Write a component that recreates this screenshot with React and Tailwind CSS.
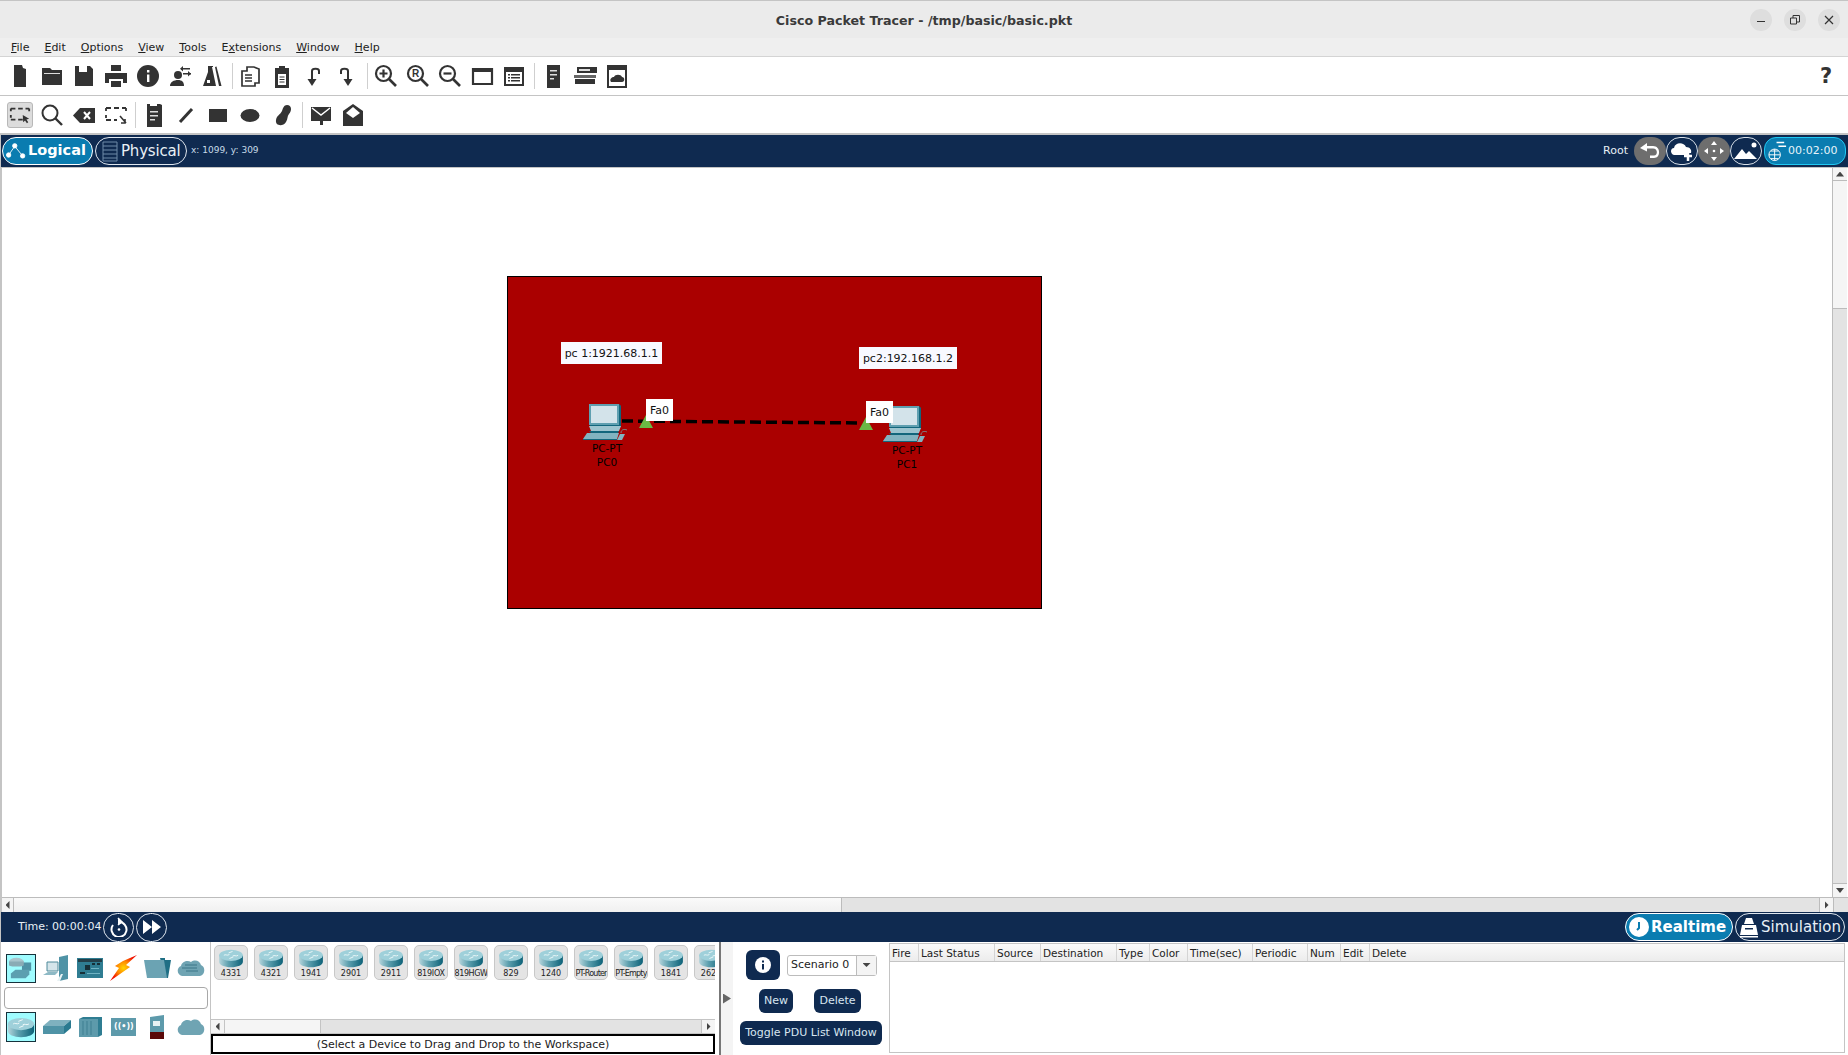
import { Fragment } from "react";

const dejavu = "font-['DejaVu_Sans',sans-serif]";

const Ico = ({ children, size = 24, fill = "#333", className = "" }) => (
  <svg width={size} height={size} viewBox="0 0 24 24" fill={fill} className={className}>
    {children}
  </svg>
);

const Sep = ({ className = "" }) => <div className={`w-px h-[26px] bg-[#cfcfcf] ${className}`} />;

const Slot = ({ children }) => <div className="w-8 flex items-center justify-center shrink-0">{children}</div>;

const Mag = ({ children }) => (
  <Ico>
    <circle cx="9.5" cy="9.5" r="7.5" fill="none" stroke="#333" strokeWidth="2.2" />
    <path d="M15 15l7 7" stroke="#333" strokeWidth="2.6" />
    {children}
  </Ico>
);

const toolbarTop = [
  <Ico><path d="M6 1h8l1 3 3 1v18H6z" /></Ico>,
  <Ico><path d="M2 4h8l2 2h10v15H2z" /><path d="M4 9h16v1H4z" fill="#ddd" /></Ico>,
  <Ico><path d="M3 2h4v6h8V2h3l3 3v17H3z" /></Ico>,
  <Ico><path d="M7 1h10v6H7zM1 9h22v10h-4v-4H5v4H1zM7 17h10v6H7z" /></Ico>,
  <Ico><circle cx="12" cy="12" r="11" /><path d="M11 6h2.4v2.4H11zM11 10.5h2.4V18H11z" fill="#fff" /></Ico>,
  <Ico><circle cx="10" cy="11" r="4" /><path d="M2 22c0-4 4-6 8-6s6 2 6 6zM13 4h9v1.6h-9zM15 9h8v1.6h-8z" /><path d="M15 2l-3 2.800 3 2.800zM20 7l3 2.800-3 2.800z" /></Ico>,
  <Ico><path d="M8 2h5v1h-1l4 19H3l5-14V3z" /><path d="M15 3l1.500-.5 5 19.500H19z" /><path d="M7 16h3v3H7z" fill="#fff" /></Ico>,
  "sep1",
  <Ico><path d="M9 3h7l5 2v14h-4v3H4V7h5z" fill="none" stroke="#333" strokeWidth="1.700" /><path d="M7 11h7M7 14h7M7 17h7" stroke="#333" strokeWidth="1.400" /></Ico>,
  <Ico><path d="M5 4h4V2h6v2h4v20H5z" /><path d="M8 10h8v11H8z" fill="#fff" /><path d="M9.500 13h5M9.500 15.500h5M9.500 18h5" stroke="#333" /></Ico>,
  <Ico><path d="M10 19V7c0-3 7-3 7 0v3" fill="none" stroke="#333" strokeWidth="2" /><path d="M5.500 15h9L10 22z" /></Ico>,
  <Ico><path d="M14 19V7c0-3-7-3-7 0v3" fill="none" stroke="#333" strokeWidth="2" /><path d="M9.500 15h9L14 22z" /></Ico>,
  "sep2",
  <Mag><path d="M9.500 5.500v8M5.500 9.500h8" stroke="#333" strokeWidth="2.200" /></Mag>,
  <Mag><text x="6" y="13" fontSize="10" fontWeight="700" fill="#333" fontFamily="Liberation Sans">R</text></Mag>,
  <Mag><path d="M5.500 9.500h8" stroke="#333" strokeWidth="2.200" /></Mag>,
  <Ico><path d="M3 5h19v15H3z" fill="none" stroke="#333" strokeWidth="2.200" /><path d="M3 5h19v3H3z" /></Ico>,
  <Ico><path d="M2 3h20v19H2z" /><path d="M4 8h16v12H4z" fill="#fff" /><path d="M9 10h9v1.500H9zM9 13h9v1.500H9zM9 16h9v1.500H9zM6 10h2v1.500H6zM6 13h2v1.500H6zM6 16h2v1.500H6z" /></Ico>,
  "sep3",
  <Ico><path d="M6 1h13v23H6z" /><path d="M9 6h7v1.500H9zM9 10h7v1.500H9zM9 14h4v1.500H9z" fill="#ddd" /></Ico>,
  <Ico><path d="M4 3h20v6H4z" /><path d="M6 5h11v2H6z" fill="#ddd" /><path d="M1 11h22v3H1z" fill="#666" /><path d="M2 15h20v5H2z" /></Ico>,
  <Ico><path d="M2 1h20v23H2z" /><path d="M4 6h16v16H4z" fill="#fff" /><path d="M6 18c-2-3 1-5 3-5 1-3 7-3 8 0 3 0 3 5 0 5z" /></Ico>,
];

const toolbarBottom = [
  <div className="w-[26px] h-[26px] rounded-[3px] bg-[#dcdcdc] border border-[#b8b8b8] flex items-center justify-center">
    <Ico size={22}><path d="M2 5h5M10 5h5M18 5h4M2 5v3M22 5v3M2 12v3M2 17h5M10 17h5" stroke="#333" strokeWidth="2" fill="none" /><path d="M15 12l7 4-3 1 2 3-1.500 1-2-3-2 2z" /></Ico>
  </div>,
  <Ico><circle cx="10" cy="10" r="7.500" fill="none" stroke="#333" strokeWidth="2" /><path d="M15 15l7 7" stroke="#333" strokeWidth="2.400" /></Ico>,
  <Ico><path d="M8 5h15v15H8L1 12.500z" /><path d="M12 9l6 7M18 9l-6 7" stroke="#fff" strokeWidth="2" /></Ico>,
  <Ico><path d="M2 5h5M10 5h5M18 5h4M2 5v3M22 5v3M2 12v3M2 17h5M10 17h3" stroke="#333" strokeWidth="1.800" fill="none" /><path d="M16 13l6 7M21 16v4h-4" stroke="#333" strokeWidth="1.600" fill="none" /></Ico>,
  "sep1",
  <Ico><path d="M5 1h3v2h7V1h3l2 1v22H5z" /><path d="M8 8h8v1.500H8zM8 12h8v1.500H8zM8 16h5v1.500H8z" fill="#ddd" /></Ico>,
  <Ico><path d="M6 19L18 6" stroke="#333" strokeWidth="3" /></Ico>,
  <Ico><path d="M3 6h18v13H3z" /></Ico>,
  <Ico><ellipse cx="12" cy="12.500" rx="9.500" ry="6.500" /></Ico>,
  <Ico><path d="M17 2c5 0 5 6 2 9-2 2-1 5-3 8-3 5-11 4-10-2 1-5 4-5 6-9 1-3 2-6 5-6z" /></Ico>,
  "sep2",
  <Ico><path d="M2 4h20v14h-8v4h-3v-4H2z" /><path d="M3 5l9 7 9-7" stroke="#fff" strokeWidth="1.500" fill="none" /></Ico>,
  <Ico><path d="M12 1l10 7v15H2V8z" /><path d="M12 4l7 6-7 5-7-5z" fill="#fff" /></Ico>,
];

const Toolbar = ({ items, className, seps }) => (
  <div className={`flex items-center pl-1 bg-white ${className}`}>
    {items.map((it, i) =>
      typeof it === "string" ? <Sep key={i} className={seps[it]} /> : <Slot key={i}>{it}</Slot>
    )}
  </div>
);

const menus = [
  ["F", "ile"],
  ["E", "dit"],
  ["O", "ptions"],
  ["V", "iew"],
  ["T", "ools"],
  ["Extensions"],
  ["W", "indow"],
  ["H", "elp"],
];

const Router = ({ size = 32 }) => (
  <svg width={size} height={(size * 24) / 32} viewBox="0 0 32 24">
    <defs>
      <linearGradient id="rside" x1="0" x2="1" y1="0" y2="0">
        <stop offset="0" stopColor="#b5d5dc" />
        <stop offset="0.4" stopColor="#5c9fae" />
        <stop offset="1" stopColor="#0d6278" />
      </linearGradient>
    </defs>
    <path d="M1 8v8c0 4 6.500 7 15 7s15-3 15-7V8z" fill="url(#rside)" />
    <ellipse cx="16" cy="8" rx="15" ry="7" fill="#9fd0da" />
    <path d="M7 8c2-2 4 1 7-1M18 9c2-2 4 1 7-1M13 5l5-2M14 12l5-2" stroke="#f2fafa" strokeWidth="1.100" fill="none" />
  </svg>
);

const devices = ["4331", "4321", "1941", "2901", "2911", "819IOX", "819HGW", "829", "1240", "PT-Router", "PT-Empty", "1841", "2620"];

const narrow = { "819IOX": "tracking-[-0.2px]", "819HGW": "tracking-[-0.4px]", "PT-Router": "tracking-[-0.8px]", "PT-Empty": "tracking-[-0.8px]" };

const DeviceCard = ({ name }) => (
  <div className="w-[34px] h-[35px] shrink-0 rounded-[5px] bg-[#e4e4e4] border border-[#c8c8c8] flex flex-col items-center pt-[3px] overflow-hidden">
    <Router size={30} />
    <span className={`text-[8px] leading-[10px] mt-px text-[#222] whitespace-nowrap ${narrow[name] || ""}`}>{name}</span>
  </div>
);

const Pc = ({ className }) => (
  <svg width="46" height="37" viewBox="0 0 46 37" className={className}>
    <path d="M6 1h29l3 2v21H7z" fill="#12667c" />
    <path d="M6 1h30v21H6z" fill="#5f9fb0" />
    <path d="M8 3h26v17H8z" fill="#d3e3ea" />
    <path d="M36 1l2 2v19l-2 1z" fill="#12667c" />
    <path d="M6 23h32l-2 5H8z" fill="#9cc4cf" />
    <path d="M6 28h30l-1 2H8z" fill="#12667c" />
    <path d="M4 30h32l-2 6H0z" fill="#82b3c0" />
    <path d="M0 36h34v1H0z" fill="#12667c" />
    <path d="M37 31h5l-3 6h-5z" fill="#82b3c0" />
    <path d="M38 30c0-4 4-4 6-3" stroke="#7a8c90" fill="none" />
  </svg>
);

const CanvasLabel = ({ className, children }) => (
  <div className={`absolute bg-[#f8f9ff] text-[#111] text-[11px] leading-none flex items-center justify-center ${className}`}>{children}</div>
);

const Tri = ({ className }) => <div className={`absolute w-[14px] h-[13px] bg-[#6ab945] [clip-path:polygon(50%_0,100%_100%,0_100%)] ${className}`} />;

const RoundBtn = ({ gray, children }) => (
  <div className={`w-[32px] h-[28px] rounded-full flex items-center justify-center ${gray ? "bg-[#6e6e6e]" : "border border-[#d8e0e8]"}`}>{children}</div>
);

const paletteTop = [
  <div className="w-[30px] h-[29px] bg-[#9ffcff] border border-[#16323c] flex items-center justify-center">
    <svg width="26" height="24" viewBox="0 0 28 26"><path d="M15 7h10v9H15z" fill="#4f93a6" /><ellipse cx="9" cy="6" rx="8" ry="4" fill="#a9c4cc" /><path d="M1 6v4c0 2 16 2 16 0V6z" fill="#8aabb5" /><path d="M3 19l5-4h15v5l-4 4H3z" fill="#5c9fb0" /></svg>
  </div>,
  <svg width="28" height="28" viewBox="0 0 28 28"><path d="M16 3l9-2v24l-9 2z" fill="#4f93a6" /><path d="M4 8h11v9H4z" fill="#d5e5ea" stroke="#4f8a9a" /><path d="M0 21l5-3h10l-3 3z" fill="#8db9c5" /><path d="M14 27l4-7h2l-3 7z" fill="#e8f2f4" /></svg>,
  <svg width="26" height="20" viewBox="0 0 26 20"><path d="M0 0h26v20H0z" fill="#2f7d92" /><path d="M1 1h24v3H1z" fill="#23404a" /><path d="M8 7h5v5H8zM15 5h3v2h-3zM20 5h3v2h-3zM3 14h5v2H3z" fill="#163038" /><path d="M14 10h8v1h-8zM10 15h13v1H10z" fill="#6fb3c3" /></svg>,
  <svg width="28" height="28" viewBox="0 0 28 28">
    <defs><radialGradient id="bolt"><stop offset="0" stopColor="#ffd400" /><stop offset="0.5" stopColor="#ff8a00" /><stop offset="1" stopColor="#f01000" /></radialGradient></defs>
    <path d="M27 1L16 11l4 2L0 27l9-13-4-2 8-5z" fill="url(#bolt)" />
  </svg>,
  <svg width="27" height="22" viewBox="0 0 27 22"><path d="M16 1h5v2h6l-3 18h-3z" fill="#1f6f85" /><path d="M0 3h20l3 18H3z" fill="#6ba3b3" /></svg>,
  <svg width="28" height="18" viewBox="0 0 28 18"><path d="M5 17C0 16-1 9 4 7c1-5 7-6 10-4 4-3 9-1 10 3 5 2 4 10-1 11z" fill="#6fa4b3" /><path d="M8 6h12M5 9h15M9 12h12" stroke="#3d7788" /></svg>,
];

const paletteBottom = [
  <div className="w-[30px] h-[30px] bg-[#9ffcff] border border-[#16323c] flex items-center justify-center"><Router size={28} /></div>,
  <svg width="28" height="14" viewBox="0 0 28 14"><path d="M7 0h21l-7 6H0z" fill="#7fb1bf" /><path d="M0 6h21v8H0z" fill="#4f93a6" /><path d="M21 6l7-6v8l-7 6z" fill="#2a7a90" /></svg>,
  <svg width="23" height="20" viewBox="0 0 23 20" className="h-[20px]"><path d="M0 2h19v18H0z" fill="#5d9aab" /><path d="M19 2l4-2v18l-4 2zM0 2l4-2h19l-4 2z" fill="#2f7d92" /><path d="M4 4v14M8 4v14M12 4v14" stroke="#3e7f91" /></svg>,
  <div className="w-[25px] h-[18px] bg-[#5d9aab] flex items-center justify-center text-[8px] text-white font-bold leading-none">((•))</div>,
  <svg width="15" height="24" viewBox="0 0 15 24"><path d="M0 2l14-2v17H0z" fill="#5d9aab" /><path d="M0 17h14v7H0z" fill="#5a0808" /><path d="M3 6h7v5H3z" fill="#e8f2f4" /></svg>,
  <svg width="28" height="18" viewBox="0 0 28 18"><path d="M5 17C0 16-1 9 4 7c1-5 7-6 10-4 4-3 9-1 10 3 5 2 4 10-1 11z" fill="#6fa4b3" /></svg>,
];

const columns = [
  ["Fire", "w-[29px]"],
  ["Last Status", "w-[76px]"],
  ["Source", "w-[46px]"],
  ["Destination", "w-[76px]"],
  ["Type", "w-[33px]"],
  ["Color", "w-[38px]"],
  ["Time(sec)", "w-[65px]"],
  ["Periodic", "w-[55px]"],
  ["Num", "w-[33px]"],
  ["Edit", "w-[29px]"],
  ["Delete", "flex-1"],
];

const NavyBtn = ({ className, children }) => (
  <div className={`bg-[#0f2a50] rounded-[6px] text-[#d8e6f0] text-[11px] flex items-center justify-center ${className}`}>{children}</div>
);

export default function App() {
  return (
    <div className={`w-[1848px] h-[1055px] overflow-hidden flex flex-col bg-[#c4c4c4] text-[#222] ${dejavu}`}>
      {/* window title */}
      <div className="h-[37px] mt-px bg-[#ebebeb] flex items-center justify-end relative shrink-0">
        <div className="absolute inset-x-0 top-[11px] text-center font-bold text-[12.650px] text-[#3a3a3a]">Cisco Packet Tracer - /tmp/basic/basic.pkt</div>
        <div className="flex gap-[12px] pr-[8px] items-center">
          <div className="w-[22px] h-[22px] rounded-full bg-[#dedede] flex items-center justify-center">
            <div className="w-[8px] h-px bg-[#333] mt-[4px]" />
          </div>
          <div className="w-[22px] h-[22px] rounded-full bg-[#dedede] flex items-center justify-center">
            <svg width="10" height="10" viewBox="0 0 10 10" fill="none" stroke="#333"><path d="M.5 3h6v6h-6zM3 3V.5h6.500V7H7" /></svg>
          </div>
          <div className="w-[22px] h-[22px] rounded-full bg-[#dedede] flex items-center justify-center">
            <svg width="10" height="10" viewBox="0 0 10 10" stroke="#333" strokeWidth="1.200"><path d="M1 1l8 8M9 1l-8 8" /></svg>
          </div>
        </div>
      </div>
      {/* menu bar */}
      <div className="h-[19px] pt-[2px] bg-[#efefef] flex items-center gap-[15px] pl-[11px] text-[11px] shrink-0 border-b border-[#d4d4d4]">
        {menus.map((m) => (
          <span key={m.join("")}>
            {m.length === 1 ? (
              <Fragment>E<span className="underline">x</span>tensions</Fragment>
            ) : (
              <Fragment><span className="underline">{m[0]}</span>{m[1]}</Fragment>
            )}
          </span>
        ))}
      </div>
      <div className="relative shrink-0">
        <Toolbar
          items={toolbarTop}
          className="h-[38px]"
          seps={{ sep1: "ml-[4px] mr-[1px]", sep2: "ml-[5px] mr-[2px]", sep3: "ml-[4px] mr-[2px]" }}
        />
        <svg width="24" height="24" viewBox="0 0 24 24" className="absolute right-[10px] top-[6px]">
          <text x="12" y="20" textAnchor="middle" fontSize="21" fontWeight="700" fill="#333" fontFamily="DejaVu Sans">?</text>
        </svg>
      </div>
      <Toolbar
        items={toolbarBottom}
        className="h-[37px] mt-px shrink-0"
        seps={{ sep1: "ml-[3px] mr-[2px]", sep2: "ml-[4px] mr-[2px]" }}
      />
      {/* logical / physical bar */}
      <div className="h-[32px] mt-[2px] ml-px bg-[#0f2a50] flex items-center pl-px pr-[2px] shrink-0 text-[#e8f0f6]">
        <div className="w-[91px] h-[28px] rounded-full bg-[#0a7cb0] border border-white flex items-center pl-[3px] gap-[1px]">
          <svg width="21" height="19" viewBox="0 0 24 20" fill="#fff" stroke="#fff"><circle cx="10" cy="3.500" r="2.500" /><circle cx="3" cy="14" r="2.500" /><circle cx="19" cy="15" r="2.500" /><path d="M10 4L3 14M10 4l9 11" fill="none" /></svg>
          <span className="font-bold text-[14.500px] text-white">Logical</span>
        </div>
        <div className="w-[92px] h-[28px] ml-[2px] rounded-full border border-[#dfe6ee] flex items-center pl-[6px] gap-[3px]">
          <svg width="16" height="21" viewBox="0 0 16 21" fill="none" stroke="#6f8aa8"><path d="M1 1h14v19H1zM1 5h14M1 9h14M1 13h14M1 17h14" /></svg>
          <span className="text-[15px] tracking-[-0.2px]">Physical</span>
        </div>
        <span className="ml-[4px] text-[9px] text-[#c8dbe8]">x: 1099, y: 309</span>
        <span className="ml-auto mr-[6px] text-[11px]">Root</span>
        <div className="flex items-center">
          <RoundBtn gray>
            <svg width="22" height="18" viewBox="0 0 22 18" fill="none"><path d="M1 6l7-5v3h6c8 0 8 12 1 12h-4v-2.500h4c4 0 4-7-1-7H8v3z" fill="#fff" /></svg>
          </RoundBtn>
          <RoundBtn>
            <svg width="24" height="22" viewBox="0 0 24 22" fill="#fff"><path d="M4 15C0 14 0 8 4 8c1-6 10-6 12-1 4 0 6 3 5 6h-4v2z" /><path d="M14 16h8M18 12v9" stroke="#fff" strokeWidth="2.500" /></svg>
          </RoundBtn>
          <RoundBtn gray>
            <svg width="20" height="20" viewBox="0 0 20 20" fill="#fff"><path d="M10 0l3 4H7zM10 20l-3-4h6zM0 10l4-3v6zM20 10l-4 3V7z" /><circle cx="10" cy="10" r="1.300" /></svg>
          </RoundBtn>
          <RoundBtn>
            <svg width="24" height="20" viewBox="0 0 24 20" fill="#fff"><path d="M0 18l8-10 4 5 3-3 8 8z" /><circle cx="20" cy="4" r="2.500" /></svg>
          </RoundBtn>
        </div>
        <div className="ml-[2px] w-[82px] h-[28px] rounded-[12px] bg-[#0a7cb0] border border-[#1fc8f2] flex items-center pl-[2px]">
          <svg width="21" height="22" viewBox="0 0 22 22" fill="none" stroke="#fff"><circle cx="8" cy="15" r="6" /><path d="M2 15h12M8 9v12M4 11h8M4 19h8" /><path d="M10 2h8M12 6h8" strokeWidth="1.500" /></svg>
          <span className="text-[11px] text-[#e8f4fa]">00:02:00</span>
        </div>
      </div>
      {/* workspace */}
      <div className="h-[729px] ml-[2px] bg-white relative flex shrink-0 mt-px">
        <div className="flex-1 relative">
          <div className="absolute left-[505px] top-[108px] w-[535px] h-[333px] bg-[#aa0000] border border-black" />
          {/* canvas offset: x-2, y-168 */}
          <CanvasLabel className="left-[559px] top-[174px] w-[101px] h-[22px]">pc 1:1921.68.1.1</CanvasLabel>
          <CanvasLabel className="left-[857px] top-[179px] w-[98px] h-[22px]">pc2:192.168.1.2</CanvasLabel>
          <svg width="260" height="8" className="absolute left-[620px] top-[250px]">
            <path d="M0 3L240 5" stroke="#000" strokeWidth="3.500" strokeDasharray="11 5" />
          </svg>
          <Pc className="absolute left-[581px] top-[235px]" />
          <Pc className="absolute left-[881px] top-[237px]" />
          <Tri className="left-[637px] top-[247px]" />
          <Tri className="left-[857px] top-[249px]" />
          <CanvasLabel className="left-[644px] top-[231px] w-[27px] h-[22px] !bg-white">Fa0</CanvasLabel>
          <CanvasLabel className="left-[864px] top-[233px] w-[27px] h-[22px] !bg-white">Fa0</CanvasLabel>
          <div className="absolute left-[555px] top-[273px] w-[100px] text-center text-[10.500px] leading-[14px] text-black">PC-PT<br />PC0</div>
          <div className="absolute left-[855px] top-[275px] w-[100px] text-center text-[10.500px] leading-[14px] text-black">PC-PT<br />PC1</div>
        </div>
        {/* vertical scrollbar */}
        <div className="w-[15px] mr-px border-l border-[#bcbcbc] flex flex-col bg-[#e3e3e3]">
          <div className="h-[13px] bg-[#f4f4f4] border-b border-[#bcbcbc] flex items-center justify-center">
            <div className="w-[8px] h-[5px] bg-[#444] [clip-path:polygon(50%_0,100%_100%,0_100%)]" />
          </div>
          <div className="h-[128px] bg-[#f5f5f5] border-b border-[#bcbcbc]" />
          <div className="flex-1" />
          <div className="h-[14px] bg-[#f4f4f4] border-t border-[#bcbcbc] flex items-center justify-center">
            <div className="w-[8px] h-[5px] bg-[#444] [clip-path:polygon(50%_100%,100%_0,0_0)]" />
          </div>
        </div>
      </div>
      {/* horizontal scrollbar */}
      <div className="h-[15px] ml-[2px] flex bg-[#e3e3e3] border-t border-[#bcbcbc] shrink-0">
        <div className="w-[12px] bg-[#f4f4f4] border-r border-[#bcbcbc] flex items-center justify-center">
          <div className="w-[4px] h-[8px] bg-[#444] [clip-path:polygon(0_50%,100%_0,100%_100%)]" />
        </div>
        <div className="w-[828px] bg-gradient-to-b from-[#fafafa] to-[#f0f0f0] border-r border-[#bcbcbc]" />
        <div className="flex-1" />
        <div className="w-[14px] border-l border-[#bcbcbc] bg-[#f4f4f4] flex items-center justify-center">
          <div className="w-[4px] h-[8px] bg-[#444] [clip-path:polygon(100%_50%,0_0,0_100%)]" />
        </div>
        <div className="w-[15px] border-l border-[#bcbcbc]" />
      </div>
      {/* realtime bar */}
      <div className="h-[30px] ml-px bg-[#0f2a50] flex items-center pl-[17px] pr-[3px] shrink-0 text-[#e8f0f6]">
        <span className="text-[11px] w-[85px] whitespace-nowrap">Time: 00:00:04</span>
        <div className="w-[31px] h-[29px] rounded-full border border-[#dfe6ee] flex items-center justify-center">
          <svg width="18" height="20" viewBox="0 0 18 20" fill="none" stroke="#fff" strokeWidth="2"><path d="M9 5a7.500 7.500 0 1 1-6 3" /><path d="M8 1l4 4-4 3" strokeWidth="1.500" fill="#fff" /><circle cx="9" cy="12.500" r="1.300" fill="#fff" stroke="none" /></svg>
        </div>
        <div className="w-[31px] h-[29px] ml-[2px] rounded-full border border-[#dfe6ee] flex items-center justify-center">
          <svg width="18" height="14" viewBox="0 0 18 14" fill="#fff"><path d="M0 0l9 7-9 7zM9 0l9 7-9 7z" /></svg>
        </div>
        <div className="ml-auto w-[108px] h-[28px] rounded-full bg-[#0a7cb0] border border-white flex items-center pl-[2px] gap-[1px]">
          <svg width="22" height="22" viewBox="0 0 22 22"><circle cx="11" cy="11" r="10" fill="#fff" /><path d="M11 6v6l-2 2" stroke="#0a7cb0" strokeWidth="2" fill="none" /></svg>
          <span className="font-bold text-[15px] text-white">Realtime</span>
        </div>
        <div className="w-[110px] h-[28px] ml-[2px] rounded-full border border-[#dfe6ee] flex items-center pl-[3px] gap-[2px]">
          <svg width="20" height="22" viewBox="0 0 20 22" fill="#fff"><path d="M7 2h6l2 6H5z" /><path d="M3 9h14l2 10H1z" /><path d="M6 12h8v1.500H6z" fill="#0f2a50" /><path d="M1 20h18v1.500H1z" /></svg>
          <span className="text-[15px]">Simulation</span>
        </div>
      </div>
      {/* bottom panels */}
      <div className="flex-1 min-h-0 ml-px bg-white flex text-[11px]">
        <div className="w-[210px] shrink-0 border-r border-[#c4c4c4] flex flex-col pt-[11px] pl-[3px] pr-[2px]">
          <div className="flex items-center justify-between h-[30px] pl-[2px]">
            {paletteTop.map((p, i) => <div key={i} className="w-[34px] flex justify-center first:justify-start">{p}</div>)}
          </div>
          <div className="h-[22px] mt-[4px] rounded-[4px] border border-[#a8a8a8] bg-white" />
          <div className="flex items-center justify-between h-[30px] mt-[3px] pl-[2px]">
            {paletteBottom.map((p, i) => <div key={i} className="w-[34px] flex justify-center first:justify-start">{p}</div>)}
          </div>
        </div>
        <div className="w-[504px] shrink-0 flex flex-col">
          <div className="h-[77px] overflow-hidden flex gap-[6px] pl-[3px] pt-[3px]">
            {devices.map((d) => <DeviceCard key={d} name={d} />)}
          </div>
          <div className="h-[15px] flex border-y border-[#c4c4c4] bg-[#e3e3e3]">
            <div className="w-[14px] bg-[#f4f4f4] border-r border-[#c4c4c4] flex items-center justify-center">
              <div className="w-[4px] h-[8px] bg-[#444] [clip-path:polygon(0_50%,100%_0,100%_100%)]" />
            </div>
            <div className="w-[96px] bg-[#f5f5f5] border-r border-[#c4c4c4]" />
            <div className="flex-1" />
            <div className="w-[14px] bg-[#f4f4f4] border-l border-[#c4c4c4] flex items-center justify-center">
              <div className="w-[4px] h-[8px] bg-[#444] [clip-path:polygon(100%_50%,0_0,0_100%)]" />
            </div>
          </div>
          <div className="h-[20px] border-2 border-black flex items-center justify-center text-[11px] leading-none">
            (Select a Device to Drag and Drop to the Workspace)
          </div>
        </div>
        <div className="w-[14px] ml-[4px] shrink-0 border-l-2 border-[#777] bg-[#f4f4f4] flex items-center justify-center">
          <div className="w-[8px] h-[10px] bg-[#666] [clip-path:polygon(0_0,100%_50%,0_100%)]" />
        </div>
        <div className="w-[155px] shrink-0 relative">
          <div className="flex items-center pl-[13px] pt-[8px] gap-[7px]">
            <NavyBtn className="w-[34px] h-[30px]">
              <svg width="16" height="16" viewBox="0 0 16 16"><circle cx="8" cy="8" r="8" fill="#fff" /><path d="M7 3.500h2v2H7zM7 7h2v5.500H7z" fill="#0f2a50" /></svg>
            </NavyBtn>
            <div className="w-[90px] h-[21px] rounded-[3px] border border-[#bcbcbc] flex items-center bg-white">
              <span className="flex-1 pl-[3px] text-[11px] pt-px">Scenario 0</span>
              <div className="w-[20px] h-full border-l border-[#bcbcbc] bg-[#f4f4f4] flex items-center justify-center">
                <div className="w-[8px] h-[4px] bg-[#444] [clip-path:polygon(50%_100%,100%_0,0_0)]" />
              </div>
            </div>
          </div>
          <div className="flex pl-[26px] mt-[9px] gap-[21px]">
            <NavyBtn className="w-[34px] h-[24px]">New</NavyBtn>
            <NavyBtn className="w-[47px] h-[24px]">Delete</NavyBtn>
          </div>
          <NavyBtn className="w-[142px] h-[24px] mt-[8px] ml-[7px]">Toggle PDU List Window</NavyBtn>
        </div>
        <div className="w-[956px] h-[110px] mt-[1px] ml-px shrink-0 border border-[#c4c4c4] flex flex-col">
          <div className="h-[18px] flex bg-gradient-to-b from-[#fafafa] to-[#ececec] border-b border-[#c4c4c4] text-[10.500px] leading-[18px]">
            {columns.map(([c, w]) => (
              <div key={c} className={`${w} pl-[2px] border-r border-[#d4d4d4] last:border-r-0 whitespace-nowrap overflow-hidden`}>{c}</div>
            ))}
          </div>
        </div>
      </div>
    </div>
  );
}
